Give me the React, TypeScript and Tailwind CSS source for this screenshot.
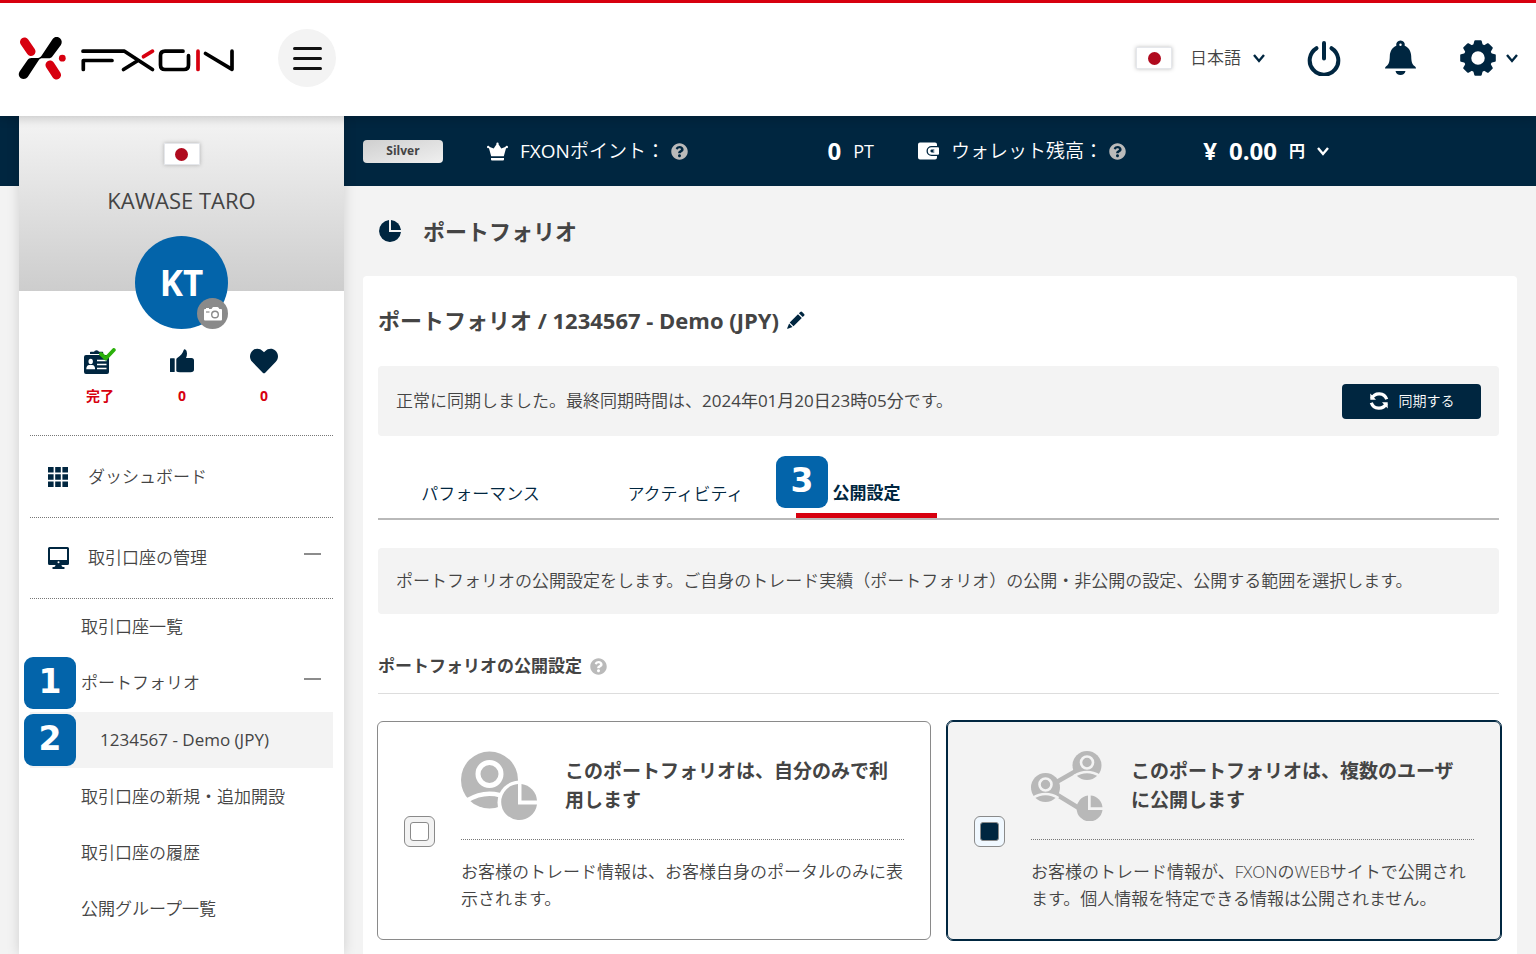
import { useState } from "react";
import type { ReactNode } from "react";
import { FaHeart, FaQuestionCircle } from "react-icons/fa";

type IconProps = { className?: string };

function Logo() {
  return (
    <svg viewBox="18 36 218 44" className="h-11 w-[218px]" fill="none" aria-label="FXON">
      <path d="M24.500 42 31 51.500M50 65l6.500 10" stroke="#d7000f" strokeWidth="9" strokeLinecap="round" />
      <circle cx="62.300" cy="58.200" r="3.400" fill="#d7000f" />
      <path
        d="M52.500 39.200c2-2.800 5.500-2.600 7.500-.9 2 1.700 2.300 4.500.9 6.600L52.500 56.300c-1 1.400-2.300 2-4 2h-5.500c-2.500 0-3.300.6-4.300 2L27.700 77c-1.600 2.200-5 2.600-7.200.9-2-1.600-2.300-4.400-.9-6.500l7.800-11.200c1-1.500 2.300-2.200 4.200-2.200h4.900c2.600 0 4-.8 5-2.300z"
        fill="#000"
      />
      <g strokeWidth="3.700" strokeLinecap="round" strokeLinejoin="round">
        <path
          d="M83 51.200h41.500L152.500 69.500M112 60.500H83.300v9M123.500 69.500 138 60.500M183 51.200H165q-4.500 0-4.500 4.500v9.300q0 4.500 4.500 4.500h19q4.500 0 4.500-4.500v-9.300M205.500 53.500l26.500 15.800V51.200"
          stroke="#000"
        />
        <path d="M143.500 56.700 152.500 51.200M198 51.200v18.300" stroke="#d7000f" />
      </g>
    </svg>
  );
}

function Flag() {
  return (
    <span className="flex h-[22px] w-9 items-center justify-center border border-gray-200 bg-white shadow-[0_0_4px_rgba(0,0,0,0.25)]">
      <span className="size-[13px] rounded-full bg-[#b00a1e]" />
    </span>
  );
}

function Chevron({ className }: IconProps) {
  return (
    <svg viewBox="0 0 12 9" className={`h-[9px] w-3 ${className ?? ""}`} fill="none" stroke="currentColor" strokeWidth="2.400">
      <path d="M1 1 6 7l5-6" />
    </svg>
  );
}

function PowerIcon() {
  return (
    <svg viewBox="0 0 34 36" className="h-9 w-[34px]" fill="none" stroke="currentColor" strokeWidth="4" strokeLinecap="round">
      <path d="M9.500 8.200a14.300 14.300 0 1 0 15 0M17 3v15.500" />
    </svg>
  );
}

function BellIcon() {
  return (
    <svg viewBox="0 0 31 36" className="h-9 w-[31px]" fill="currentColor">
      <path
        fillRule="evenodd"
        d="M15.500.5a4.200 4.200 0 0 1 4.200 5.200c4.200 1.700 6.300 5.700 6.500 10.300.2 5.500.5 8 3.600 10.300.8.600 1.200 1.400 1.200 2.200H0c0-.8.400-1.600 1.200-2.200C4.300 24 4.600 21.500 4.800 16c.2-4.600 2.300-8.600 6.500-10.300A4.200 4.200 0 0 1 15.500.5zm0 3a1.200 1.200 0 1 0 0 2.400 1.200 1.200 0 0 0 0-2.400z"
      />
      <path d="M10.500 31h10c-.5 2.500-2.400 4-5 4s-4.500-1.500-5-4z" />
    </svg>
  );
}

function GearIcon() {
  return (
    <svg viewBox="-18 -18 36 36" className="size-9" fill="currentColor">
      {[0, 45, 90, 135, 180, 225, 270, 315].map((angle) => (
        <path key={angle} d="M-5-12-3.700-17q.2-.8 1-.8h5.400q.8 0 1 .8L5-12z" transform={`rotate(${angle})`} />
      ))}
      <circle r="10.500" fill="none" stroke="currentColor" strokeWidth="7.500" />
    </svg>
  );
}

function PieIcon({ className }: IconProps) {
  return (
    <svg viewBox="0 0 22 22" className={className} fill="currentColor">
      <path d="M10 0v12h12A11 11 0 1 1 10 0z" />
      <path d="M12 0A11 11 0 0 1 22 10H12z" />
    </svg>
  );
}

function CrownIcon() {
  return (
    <svg viewBox="0 0 21 19" className="h-[19px] w-[21px]" fill="currentColor">
      <path d="M10.500.8 14.300 6.500 19.500 4.500 16.800 14.300H4.200L1.500 4.500l5.200 2zM4 16h13v1.500q0 1-1 1H5q-1 0-1-1z" />
      <circle cx="10.500" cy="1.600" r="1.100" />
      <circle cx="1.200" cy="5" r="1.200" />
      <circle cx="19.800" cy="5" r="1.200" />
    </svg>
  );
}

function WalletIcon() {
  return (
    <svg viewBox="0 0 21 18" className="h-[18px] w-[21px]" fill="currentColor">
      <path d="M2 .5h15q2 0 2 2V4h-5.500a5 5 0 0 0 0 10H19v1.500q0 2-2 2H2q-2 0-2-2v-13q0-2 2-2z" />
      <path
        fillRule="evenodd"
        d="M13.500 5.300H20q1 0 1 1v5.400q0 1-1 1h-6.500a3.700 3.700 0 0 1 0-7.400zm.3 2.300a1.400 1.400 0 1 0 0 2.800h2.500V9.600h-1.200V8.400h1.200v-.8z"
      />
    </svg>
  );
}

function PencilIcon() {
  return (
    <svg viewBox="0 0 18 18" className="size-[18px]" fill="currentColor">
      <path d="M13.300.9q.9-.9 1.800 0l2 2q.9.900 0 1.800L15.700 6.100 11.900 2.300zM11 3.200 14.800 7 6.500 15.300 2.700 11.500zM2.100 12.500l3.400 3.400L.8 17.800q-.9.200-.6-.6z" />
    </svg>
  );
}

function SyncIcon() {
  return (
    <svg viewBox="0 0 20 20" className="size-5" fill="none" stroke="currentColor" strokeWidth="3.200">
      <path d="M2.800 7.500A8 8 0 0 1 17.700 8.300M17.200 12.500A8 8 0 0 1 2.300 11.700" />
      <path d="M1.300 2.500v6.200H7zM18.700 17.500v-6.200H13z" fill="currentColor" stroke="none" />
    </svg>
  );
}

function IdCardIcon() {
  return (
    <svg viewBox="0 0 32 26" className="h-[26px] w-8" fill="currentColor">
      <path d="M2 7h21q2 0 2 2v15q0 2-2 2H2q-2 0-2-2V9q0-2 2-2zM6 6V4.500q0-.7.700-.7H10q.5-1.600 2.500-1.600t2.500 1.600h3.500q.7 0 .7.700V6z" />
      <g fill="#fff">
        <ellipse cx="6.700" cy="13.500" rx="2.200" ry="2.700" />
        <path d="M2.300 21.300q0-4 3-4.200h2.800q3 .2 3 4.200zM13 11.800h9.500v1.500H13zM13 15.800h9.500v1.500H13zM13 19.800h9.500v1.500H13z" />
      </g>
      <path d="m17 6 4.800 4.500L29.800 2" fill="none" stroke="#2bb00b" strokeWidth="3.800" strokeLinecap="round" strokeLinejoin="round" />
    </svg>
  );
}

function ThumbIcon() {
  return (
    <svg viewBox="0 0 24 24" className="size-6" fill="currentColor">
      <path d="M.5 9.200h3.700q.5 0 .5.500v12.800q0 .5-.5.500H.5q-.5 0-.5-.5V9.700q0-.5.500-.5z" />
      <path d="M13.600 1.200Q14 0 15 .2q2 .8 2 4.300 0 2.200-1 4.500h5.500Q24 9 24 11.500v9q0 2.800-3.500 2.800H10q-2.700 0-3.700-1V10.500q0-1 1.200-1.800Q12.500 5.500 13.600 1.200z" />
    </svg>
  );
}

function CameraIcon() {
  return (
    <svg viewBox="0 0 18 14" className="h-3.5 w-[18px]" fill="none">
      <path d="M1 2h1V1h3v1h2.500l1-1.500Q8.800 0 9.400 0h4q.7 0 1 .5l1 1.500H17q1 0 1 1v9.500q0 1-1 1H1q-1 0-1-1V3q0-1 1-1z" fill="#fff" />
      <circle cx="11" cy="7.500" r="3.300" stroke="#8a8a8a" strokeWidth="1.400" />
      <path d="M2 5h3.500" stroke="#8a8a8a" strokeWidth="1.200" />
    </svg>
  );
}

function GridIcon() {
  return (
    <svg viewBox="0 0 20 20" className="size-5" fill="currentColor">
      <path d="M0 0h5.600v5.600H0zM7.200 0h5.600v5.600H7.200zM14.400 0H20v5.600h-5.600zM0 7.200h5.600v5.600H0zM7.200 7.200h5.600v5.600H7.200zM14.400 7.200H20v5.600h-5.600zM0 14.400h5.600V20H0zM7.200 14.400h5.600V20H7.200zM14.400 14.400H20V20h-5.600z" />
    </svg>
  );
}

function MonitorIcon() {
  return (
    <svg viewBox="0 0 21 22" className="h-[22px] w-[21px]" fill="currentColor">
      <path
        fillRule="evenodd"
        d="M1.500 0h18Q21 0 21 1.500v15q0 1.500-1.500 1.500h-6q0 1.500 1.300 2h1q.9 0 .9 1t-.9 1H5.200q-.9 0-.9-1t.9-1h1q1.300-.5 1.300-2h-6Q0 18 0 16.500v-15Q0 0 1.500 0zM2 2v11h17V2zm8.500 12.200a1 1 0 1 0 0 2 1 1 0 0 0 0-2z"
      />
    </svg>
  );
}

function PrivateArt() {
  return (
    <svg viewBox="0 0 76 70" className="h-[70px] w-[76px] shrink-0 text-[#b8b8b8]" fill="currentColor">
      <circle cx="28.500" cy="29" r="28.500" />
      <circle cx="28.500" cy="23" r="11.500" fill="none" className="stroke-white" strokeWidth="5" />
      <path d="M6 49.500Q28.500 36 51 49.500" fill="none" className="stroke-white" strokeWidth="4.500" />
      <circle cx="58.500" cy="51.500" r="22" className="fill-white" />
      <path d="M57 33v20.500h19A18 18 0 1 1 57 33z" />
      <path d="M60.500 33A18 18 0 0 1 76 49.500H60.500z" />
    </svg>
  );
}

function Person({ x, y }: { x: number; y: number }) {
  return (
    <g transform={`translate(${x} ${y})`}>
      <circle r="14.500" />
      <circle cy="-3" r="6" fill="none" stroke="#f3f3f3" strokeWidth="2.600" />
      <path d="M-13 10.500Q0 2.500 13 10.500" fill="none" stroke="#f3f3f3" strokeWidth="2.400" />
    </g>
  );
}

function PublicArt() {
  return (
    <svg viewBox="0 0 72 70" className="h-[70px] w-[72px] shrink-0 text-[#b8b8b8]" fill="currentColor">
      <path d="M52 16 15 37l36 22" fill="none" stroke="currentColor" strokeWidth="4.500" />
      <Person x={56} y={14.5} />
      <Person x={14.5} y={36.5} />
      <path d="M57 44.500V59h14.500A13 13 0 1 1 57 44.500z" />
      <path d="M59.500 44.500A13 13 0 0 1 71.500 56.500h-12z" />
      <path d="M58.200 43.500v14.200H72" fill="none" stroke="#f3f3f3" strokeWidth="2.400" />
    </svg>
  );
}

function StepBadge({ children, className }: { children: ReactNode; className: string }) {
  return (
    <span
      className={`absolute flex size-[52px] items-center justify-center rounded-[9px] bg-[#0364aa] pb-1 font-['DejaVu_Sans'] text-[33px] leading-none font-bold text-white ${className}`}
    >
      {children}
    </span>
  );
}

function Help() {
  return (
    <button type="button" aria-label="ヘルプ">
      <FaQuestionCircle className="size-[17px] text-[#bababa]" />
    </button>
  );
}

const subMenu = [
  { label: "取引口座一覧" },
  { label: "ポートフォリオ", step: 1, open: true },
  { label: "1234567 - Demo (JPY)", step: 2, active: true },
  { label: "取引口座の新規・追加開設" },
  { label: "取引口座の履歴" },
  { label: "公開グループ一覧" },
];

const tabs = ["パフォーマンス", "アクティビティ"];

const options = [
  {
    value: "private",
    art: <PrivateArt />,
    title: "このポートフォリオは、自分のみで利用します",
    text: "お客様のトレード情報は、お客様自身のポータルのみに表示されます。",
  },
  {
    value: "public",
    art: <PublicArt />,
    title: "このポートフォリオは、複数のユーザに公開します",
    text: "お客様のトレード情報が、FXONのWEBサイトで公開されます。個人情報を特定できる情報は公開されません。",
  },
];

function Header() {
  return (
    <header className="relative z-20 flex h-[116px] items-center border-t-[3px] border-[#d7000f] bg-white pr-[18px] pb-[3px] pl-[18px] text-[#002640] shadow-[0_2px_10px_rgba(0,0,0,0.2)]">
      <a href="#" className="mr-[42px]">
        <Logo />
      </a>
      <button
        type="button"
        aria-label="メニュー"
        className="flex size-[58px] flex-col items-center justify-center gap-[7px] rounded-full bg-[#f3f3f3]"
      >
        <span className="h-[3px] w-[29px] rounded-full bg-[#111]" />
        <span className="h-[3px] w-[29px] rounded-full bg-[#111]" />
        <span className="h-[3px] w-[29px] rounded-full bg-[#111]" />
      </button>

      <div className="ml-auto flex items-center">
        <Flag />
        <label className="ml-[18px] flex items-center gap-3">
          <select aria-label="言語" className="field-sizing-content appearance-none text-[17px] leading-6 text-[#444]">
            <option>日本語</option>
            <option>English</option>
          </select>
          <Chevron />
        </label>
        <button type="button" aria-label="ログアウト" className="ml-[42px]">
          <PowerIcon />
        </button>
        <button type="button" aria-label="お知らせ" className="ml-11">
          <BellIcon />
        </button>
        <button type="button" aria-label="設定" className="ml-11 flex items-center gap-2.5">
          <GearIcon />
          <Chevron />
        </button>
      </div>
    </header>
  );
}

function Sidebar() {
  return (
    <aside className="relative z-10 w-[325px] shrink-0 bg-white shadow-[0_0_12px_rgba(0,0,0,0.15)]">
      <div className="flex flex-col items-center bg-linear-to-b from-[#f4f4f4] to-[#cdcdcd] pt-[27px]">
        <Flag />
        <p className="mt-[21px] text-[22px] leading-7 font-normal">KAWASE TARO</p>
        <div className="relative mt-[22px] -mb-[38px] flex size-[93px] items-center justify-center rounded-full bg-[#0364aa] text-[35px] leading-none font-bold text-white">
          KT
          <button
            type="button"
            aria-label="写真を変更"
            className="absolute right-0 bottom-0 flex size-[31px] items-center justify-center rounded-full bg-[#8a8a8a]"
          >
            <CameraIcon />
          </button>
        </div>
      </div>

      <div className="mt-[56px] ml-10 grid w-[246px] grid-cols-3 justify-items-center pb-[29px] text-sm leading-5 font-bold text-[#d7000f]">
        <div className="flex flex-col items-center gap-3">
          <span className="flex h-[27px] items-center text-[#002640]"><IdCardIcon /></span>
          完了
        </div>
        <div className="flex flex-col items-center gap-3">
          <span className="flex h-[27px] items-center text-[#002640]"><ThumbIcon /></span>
          0
        </div>
        <div className="flex flex-col items-center gap-3">
          <span className="flex h-[27px] items-center text-[#002640]"><FaHeart className="size-7" /></span>
          0
        </div>
      </div>

      <nav className="mx-[11px] text-[17px] leading-6">
        <a href="#" className="flex h-[82px] items-center border-t border-dotted border-[#777] pl-[18px]">
          <span className="w-10 text-[#002640]"><GridIcon /></span>
          ダッシュボード
        </a>
        <a href="#" className="flex h-[82px] items-center border-y border-dotted border-[#777] pr-3 pl-[18px]">
          <span className="w-10 text-[#002640]"><MonitorIcon /></span>
          取引口座の管理
          <span className="mb-2 ml-auto h-0.5 w-[17px] bg-[#8c8c8c]" />
        </a>
        {subMenu.map((item) => (
          <a
            key={item.label}
            href="#"
            className={`relative flex h-14 items-center pr-3 ${item.active ? "my-px bg-[#f3f3f3] pl-[70px] font-normal" : "pl-[51px]"}`}
          >
            {item.step && <StepBadge className="top-0.5 -left-1.5">{item.step}</StepBadge>}
            {item.label}
            {item.open && <span className="mb-2 ml-auto h-0.5 w-[17px] bg-[#8c8c8c]" />}
          </a>
        ))}
      </nav>
    </aside>
  );
}

function StatusBar() {
  return (
    <div className="flex h-[70px] items-center text-[19px] leading-7 text-white">
      <span className="mr-11 flex h-[23px] w-20 items-center justify-center rounded bg-linear-to-br from-[#cfcfcf] to-[#f0f0f0] text-xs font-bold text-[#444]">
        Silver
      </span>
      <div className="mr-11 flex w-[387px] items-center">
        <CrownIcon />
        <span className="mr-1.5 ml-3">
          <span className="font-normal">FXON</span>ポイント：
        </span>
        <Help />
        <b className="mr-3 ml-auto text-2xl leading-7 font-bold">0</b>
        <span className="text-lg font-normal">PT</span>
      </div>
      <div className="flex w-[411px] items-center">
        <WalletIcon />
        <span className="mr-1.5 ml-3">ウォレット残高：</span>
        <Help />
        <b className="ml-auto flex items-center gap-3 text-2xl leading-7 font-bold">
          <span>¥</span>
          <span>0.00</span>
        </b>
        <label className="ml-3 flex items-center gap-3">
          <select aria-label="通貨" className="field-sizing-content appearance-none text-base leading-6 font-bold text-white">
            <option>円</option>
          </select>
          <Chevron />
        </label>
      </div>
    </div>
  );
}

export default function App() {
  const [visibility, setVisibility] = useState("public");

  return (
    <div className="flex min-h-screen flex-col bg-[#f3f3f3] font-['Open_Sans','Noto_Sans_CJK_JP',sans-serif] font-[350] text-[#444]">
      <Header />

      <div className="flex flex-1 bg-[linear-gradient(#002640_70px,#f3f3f3_70px)] pl-[19px]">
        <Sidebar />

        <main className="flex min-w-0 flex-1 flex-col pr-[19px] pl-[19px]">
          <StatusBar />

          <h1 className="flex h-[90px] items-center gap-[22px] pl-4 text-[22px] leading-8 font-bold">
            <PieIcon className="size-[22px] text-[#002640]" />
            ポートフォリオ
          </h1>

          <section className="flex-1 rounded-t bg-white pt-7 pr-[18px] pb-3 pl-[15px]">
            <div className="flex items-center gap-2">
              <h2 className="text-[22px] leading-8 font-bold">ポートフォリオ / 1234567 - Demo (JPY)</h2>
              <button type="button" aria-label="編集" className="text-[#002640]">
                <PencilIcon />
              </button>
            </div>

            <div className="mt-[30px] flex h-[70px] items-center justify-between rounded bg-[#f3f3f3] px-[18px]">
              <p className="text-[17px] leading-7">
                正常に同期しました。最終同期時間は、
                <time dateTime="2024-01-20T23:05" className="font-normal">2024年01月20日23時05分</time>
                です。
              </p>
              <button
                type="button"
                className="flex h-[35px] w-[139px] items-center justify-center gap-2.5 rounded bg-[#002640] text-sm leading-5 text-white"
              >
                <SyncIcon />
                同期する
              </button>
            </div>

            <div role="tablist" className="mt-[31px] flex h-[53px] border-b-2 border-[#b9b9b9] text-[17px] leading-[48px] text-[#002640]">
              {tabs.map((tab) => (
                <button key={tab} type="button" role="tab" className="w-[205px] pt-0.5">
                  {tab}
                </button>
              ))}
              <button
                type="button"
                role="tab"
                aria-selected="true"
                className="relative ml-2 w-[141px] border-b-[5px] border-[#d7000f] pt-0.5 font-bold"
              >
                <StepBadge className="-top-[11px] -left-5">3</StepBadge>
                公開設定
              </button>
            </div>

            <p className="mt-7 rounded bg-[#f3f3f3] px-[18px] py-[19px] text-[17px] leading-7">
              ポートフォリオの公開設定をします。ご自身のトレード実績（ポートフォリオ）の公開・非公開の設定、公開する範囲を選択します。
            </p>

            <div className="mt-[38px] flex items-center gap-2 border-b border-[#ddd] pb-[13px]">
              <h3 className="text-[17px] leading-7 font-bold">ポートフォリオの公開設定</h3>
              <Help />
            </div>

            <div className="mt-[27px] -mr-0.5 -ml-px grid grid-cols-2 gap-4">
              {options.map((option) => (
                <label
                  key={option.value}
                  className="flex items-center rounded-md border border-[#8a8a8a] bg-white pt-[29px] pr-[26px] pb-[27px] pl-[26px] outline-[#002640] has-checked:border-[#002640] has-checked:bg-[#f3f3f3] has-checked:outline"
                >
                  <input
                    type="radio"
                    name="visibility"
                    value={option.value}
                    checked={visibility === option.value}
                    onChange={() => setVisibility(option.value)}
                    className="mr-[26px] flex size-[31px] shrink-0 appearance-none items-center justify-center rounded-md border border-[#8a8a8a] bg-[#f3f3f3] before:size-[19px] before:rounded-[3px] before:border before:border-[#8a8a8a] before:bg-white checked:bg-[#f0f8ff] checked:before:bg-[#002640]"
                  />
                  <span className="flex min-w-0 flex-1 flex-col">
                    <span className="flex items-center gap-7 border-b border-dotted border-[#777] pb-[18px]">
                      {option.art}
                      <b className="pr-1 text-[19px] leading-[29px] font-bold">{option.title}</b>
                    </span>
                    <span className="mt-[18px] text-[17px] leading-[27px]">{option.text}</span>
                  </span>
                </label>
              ))}
            </div>
          </section>
        </main>
      </div>
    </div>
  );
}
